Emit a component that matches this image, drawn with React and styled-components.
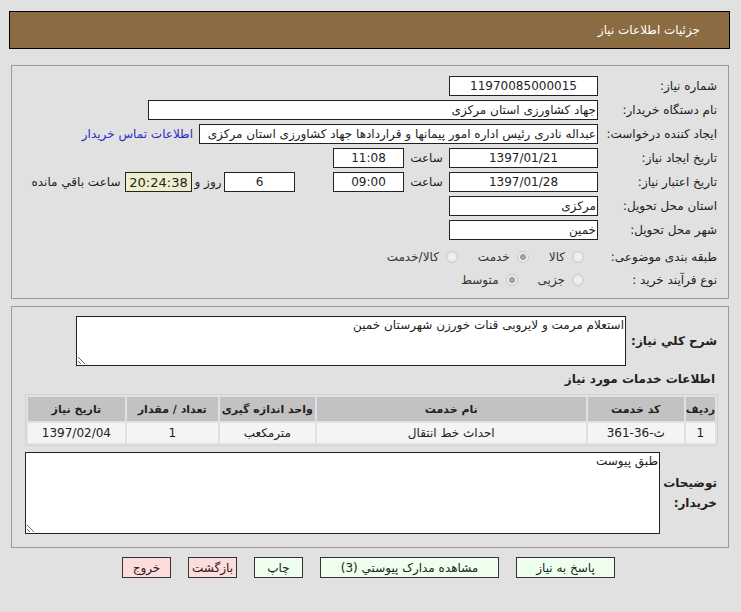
import React from "react";
import styled, { createGlobalStyle } from "styled-components";

const GlobalStyle = createGlobalStyle`
  body {
    margin: 0;
    background: #e1e1e1;
    font-family: "DejaVu Sans", Tahoma, sans-serif;
    font-size: 12px;
    color: #222;
  }
`;

const Page = styled.div`
  direction: rtl;
  width: 741px;
  padding-top: 11px;
`;

const Header = styled.div`
  margin: 0 11px 0 9px;
  height: 36px;
  background: #8b6b41;
  border: 1px solid #000;
  color: #fff;
  font-size: 12px;
  display: flex;
  align-items: center;
  padding-right: 29px;
`;

const Panel = styled.div`
  margin: ${(p) => p.$top}px 12px 0 11px;
  border: 1px solid #9a9a9a;
  padding: ${(p) => p.$pad};
`;

const Row = styled.div`
  display: flex;
  align-items: center;
  height: ${(p) => p.$h || 24}px;
  margin-top: ${(p) => p.$mt || 0}px;
`;

const Label = styled.div`
  width: 117px;
  flex: none;
  white-space: nowrap;
  margin-left: 2px;
`;

const Field = styled.input.attrs({ readOnly: true })`
  box-sizing: border-box;
  width: ${(p) => p.$w}px;
  height: 20px;
  border: 1px solid #222;
  background: ${(p) => (p.$hl ? "#eeeecc" : "#fff")};
  font: inherit;
  font-size: ${(p) => p.$fs || 12}px;
  color: #222;
  text-align: ${(p) => (p.$center ? "center" : "right")};
  padding: 0 1px;
  direction: rtl;
  outline: none;
`;

const Caption = styled.span`
  width: ${(p) => p.$w}px;
  text-align: center;
  flex: none;
  white-space: nowrap;
`;

const LinkText = styled.a`
  color: #2b2bc8;
  text-decoration: none;
  margin-right: 6px;
  white-space: nowrap;
`;

const Options = styled.div`
  display: flex;
  align-items: center;
  padding-right: 14px;
`;

const Option = styled.label`
  display: flex;
  align-items: center;
  margin-left: 20px;
  color: #333;
`;

const Radio = styled.span`
  box-sizing: border-box;
  width: 12px;
  height: 12px;
  border-radius: 50%;
  border: 1px solid #c9c9c9;
  background: radial-gradient(circle, #f4f4f4 0%, #e4e4e4 100%);
  margin-left: 7px;
  position: relative;
  &::after {
    content: "";
    display: ${(p) => (p.$on ? "block" : "none")};
    position: absolute;
    inset: 2px;
    border-radius: 50%;
    background: #a8a8a8;
    border: 1px solid #8e8e8e;
    box-sizing: border-box;
  }
`;

const BoldLabel = styled.div`
  width: ${(p) => p.$w}px;
  flex: none;
  font-weight: bold;
  font-size: 12px;
  line-height: 20px;
  white-space: ${(p) => (p.$wrap ? "normal" : "nowrap")};
`;

const Area = styled.textarea.attrs({ readOnly: true })`
  box-sizing: border-box;
  width: ${(p) => p.$w}px;
  height: ${(p) => p.$h}px;
  border: 1px solid #222;
  background: #fff;
  font: inherit;
  font-size: 12px;
  color: #222;
  padding: 1px 1px;
  direction: rtl;
  resize: both;
  outline: none;
  display: block;
`;

const Heading = styled.div`
  font-weight: bold;
  font-size: 12px;
  margin: 6px 2px 4px 0;
  height: 18px;
`;

const Table = styled.table`
  width: 693px;
  border: 1px solid #d2d2d2;
  border-spacing: 2px;
  margin-right: -1px;
  font-size: 12px;
`;

const Th = styled.th`
  background: #c2c2c2;
  height: 24px;
  font-weight: bold;
  font-size: 11px;
  white-space: nowrap;
  color: #222;
  padding: 0;
  width: ${(p) => p.$w}px;
`;

const Td = styled.td`
  background: #f4f4f4;
  height: 20px;
  text-align: center;
  padding: 0;
  color: #222;
`;

const Buttons = styled.div`
  display: flex;
  justify-content: center;
  gap: 17px;
  margin-top: 9px;
  padding-right: 4px;
`;

const Button = styled.button`
  box-sizing: border-box;
  width: ${(p) => p.$w}px;
  height: 21px;
  border: 1px solid #333;
  background: ${(p) => (p.$red ? "#ffdcdc" : "#eeffee")};
  font: inherit;
  font-size: 12px;
  color: #222;
  padding: 0;
  white-space: nowrap;
  overflow: visible;
  direction: rtl;
`;

const services = [
  { row: "1", code: "ث-36-361", name: "احداث خط انتقال", unit: "مترمکعب", qty: "1", date: "1397/02/04" },
];

export default function App() {
  return (
    <Page>
      <GlobalStyle />
      <Header>جزئیات اطلاعات نیاز</Header>

      <Panel $top={16} $pad="8px 11px 7px 0">
        <Row>
          <Label>شماره نیاز:</Label>
          <Field $w={149} $center value="11970085000015" />
        </Row>
        <Row>
          <Label>نام دستگاه خریدار:</Label>
          <Field $w={450} value="جهاد کشاورزی استان مرکزی" />
        </Row>
        <Row>
          <Label>ایجاد کننده درخواست:</Label>
          <Field $w={399} value="عبداله نادری رئیس اداره امور پیمانها و قراردادها جهاد کشاورزی استان مرکزی" />
          <LinkText href="#">اطلاعات تماس خریدار</LinkText>
        </Row>
        <Row>
          <Label>تاریخ ایجاد نیاز:</Label>
          <Field $w={149} $center value="1397/01/21" />
          <Caption $w={45}>ساعت</Caption>
          <Field $w={71} $center value="11:08" />
        </Row>
        <Row>
          <Label>تاریخ اعتبار نیاز:</Label>
          <Field $w={149} $center value="1397/01/28" />
          <Caption $w={45}>ساعت</Caption>
          <Field $w={71} $center value="09:00" />
          <Caption $w={38} />
          <Field $w={71} $center value="6" />
          <Caption $w={32}>روز و</Caption>
          <Field $w={67} $center $hl $fs={13} value="20:24:38" />
          <Caption $w={98}>ساعت باقي مانده</Caption>
        </Row>
        <Row>
          <Label>استان محل تحویل:</Label>
          <Field $w={149} value="مرکزی" />
        </Row>
        <Row>
          <Label>شهر محل تحویل:</Label>
          <Field $w={149} value="خمین" />
        </Row>
        <Row $h={23} $mt={3}>
          <Label>طبقه بندی موضوعی:</Label>
          <Options>
            <Option><Radio />کالا</Option>
            <Option><Radio $on />خدمت</Option>
            <Option><Radio />کالا/خدمت</Option>
          </Options>
        </Row>
        <Row $h={23}>
          <Label>نوع فرآیند خرید :</Label>
          <Options>
            <Option><Radio />جزیی</Option>
            <Option><Radio $on />متوسط</Option>
          </Options>
        </Row>
      </Panel>

      <Panel $top={7} $pad="9px 11px 13px 0">
        <Row $h={50}>
          <BoldLabel $w={91}>شرح کلي نياز:</BoldLabel>
          <Area $w={550} $h={50} defaultValue="استعلام مرمت و لایروبی قنات خورزن شهرستان خمین" />
        </Row>
        <Heading>اطلاعات خدمات مورد نیاز</Heading>
        <Table>
          <thead>
            <tr>
              <Th $w={28}>ردیف</Th>
              <Th $w={96}>کد خدمت</Th>
              <Th $w={269}>نام خدمت</Th>
              <Th $w={95}>واحد اندازه گیری</Th>
              <Th $w={91}>تعداد / مقدار</Th>
              <Th>تاریخ نیاز</Th>
            </tr>
          </thead>
          <tbody>
            {services.map((s) => (
              <tr key={s.row}>
                <Td>{s.row}</Td>
                <Td>{s.code}</Td>
                <Td>{s.name}</Td>
                <Td>{s.unit}</Td>
                <Td>{s.qty}</Td>
                <Td>{s.date}</Td>
              </tr>
            ))}
          </tbody>
        </Table>
        <Row $h={82} $mt={6}>
          <BoldLabel $w={57} $wrap>توضیحات خریدار:</BoldLabel>
          <Area $w={635} $h={82} defaultValue="طبق پیوست" />
        </Row>
      </Panel>

      <Buttons>
        <Button $w={99}>پاسخ به نیاز</Button>
        <Button $w={179}>مشاهده مدارک پیوستي (3)</Button>
        <Button $w={49}>چاپ</Button>
        <Button $w={49} $red>بازگشت</Button>
        <Button $w={49} $red>خروج</Button>
      </Buttons>
    </Page>
  );
}
